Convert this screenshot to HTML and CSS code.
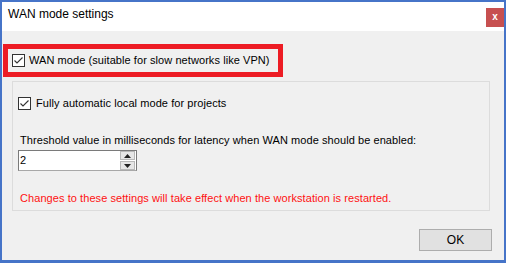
FILE: index.html
```html
<!DOCTYPE html>
<html>
<head>
<meta charset="utf-8">
<link rel="stylesheet" href="styles.css">
</head>
<body>
<div class="window">
  <div class="titlebar">
    <span class="title">WAN mode settings</span>
    <div class="close">x</div>
  </div>
  <div class="content">
    <div class="highlight">
      <div class="check">
        <svg class="box" width="13" height="13" viewBox="0 0 13 13"><rect x="0.5" y="0.5" width="12" height="12" fill="#fff" stroke="#333"/><polyline points="2.5,6.5 5,9 10.5,3.5" fill="none" stroke="#333" stroke-width="1.1"/></svg>
        <span class="ctext">WAN mode (suitable for slow networks like VPN)</span>
      </div>
    </div>
    <div class="group">
      <div class="check row1">
        <svg class="box" width="13" height="13" viewBox="0 0 13 13"><rect x="0.5" y="0.5" width="12" height="12" fill="#fff" stroke="#333"/><polyline points="2.5,6.5 5,9 10.5,3.5" fill="none" stroke="#333" stroke-width="1.1"/></svg>
        <span class="ctext wide">Fully automatic local mode for projects</span>
      </div>
      <div class="label">Threshold value in milliseconds for latency when WAN mode should be enabled:</div>
      <div class="spin">
        <span class="val">2</span>
        <div class="btns">
          <div class="sbtn"><svg width="7" height="4" viewBox="0 0 7 4"><polygon points="3.5,0 7,4 0,4" fill="#222"/></svg></div>
          <div class="sbtn"><svg width="7" height="4" viewBox="0 0 7 4"><polygon points="0,0 7,0 3.5,4" fill="#222"/></svg></div>
        </div>
      </div>
      <div class="warn">Changes to these settings will take effect when the workstation is restarted.</div>
    </div>
    <div class="footer">
      <div class="ok">OK</div>
    </div>
  </div>
</div>
</body>
</html>
```
FILE: styles.css
```css
html, body {
  margin: 0;
  padding: 0;
  background: #f0f0f0;
}
.window {
  width: 506px;
  height: 263px;
  box-sizing: border-box;
  border-style: solid;
  border-color: #4674c8;
  border-width: 2px 2px 3px 2px;
  display: flex;
  flex-direction: column;
  font-family: "Liberation Sans", Arial, sans-serif;
  font-size: 11px;
  letter-spacing: 0.07px;
  color: #000;
}
.titlebar {
  height: 29px;
  background: #fff;
  display: flex;
  align-items: flex-start;
  flex-shrink: 0;
}
.title {
  font-size: 12px;
  letter-spacing: 0;
  line-height: 25px;
  padding-left: 6px;
}
.close {
  margin-left: auto;
  margin-top: 6px;
  width: 18px;
  height: 19px;
  background: #c75050;
  color: #fff;
  font-weight: bold;
  font-size: 10px;
  line-height: 17px;
  text-align: center;
}
.content {
  flex: 1;
  background: #f0f0f0;
  display: flex;
  flex-direction: column;
}
.highlight {
  margin-top: 13px;
  margin-left: 1px;
  width: 280px;
  height: 33px;
  box-sizing: border-box;
  border: 5px solid #ed1c24;
  display: flex;
  align-items: center;
  padding-left: 4px;
}
.check {
  display: flex;
  align-items: center;
}
.box {
  display: block;
  flex-shrink: 0;
}
.ctext {
  margin-left: 4px;
  line-height: 13px;
}
.ctext.wide {
  margin-left: 5px;
}
.group {
  margin-top: 4px;
  margin-left: 10px;
  width: 478px;
  height: 130px;
  box-sizing: border-box;
  border: 1px solid #dcdcdc;
  padding-left: 5px;
  display: flex;
  flex-direction: column;
}
.row1 {
  margin-top: 15px;
  height: 13px;
}
.label {
  margin-top: 24px;
  margin-left: 2px;
  line-height: 13px;
}
.spin {
  margin-top: 3px;
  width: 119px;
  height: 21px;
  box-sizing: border-box;
  border: 1px solid #7a7a7a;
  border-bottom-color: #a8a8a8;
  background: #fff;
  display: flex;
  align-items: center;
}
.val {
  padding-left: 1px;
  flex: 1;
  line-height: 13px;
}
.btns {
  width: 15px;
  height: 19px;
  display: flex;
  flex-direction: column;
  gap: 1px;
  padding-right: 1px;
}
.sbtn {
  flex: 1;
  background: #e6e6e6;
  border: 1px solid #b8b8b8;
  display: flex;
  align-items: center;
  justify-content: center;
}
.sbtn svg {
  display: block;
}
.warn {
  margin-top: 21px;
  margin-left: 2px;
  line-height: 13px;
  color: #ff1010;
}
.footer {
  margin-top: 18px;
  display: flex;
  justify-content: flex-end;
  padding-right: 12px;
}
.ok {
  width: 73px;
  height: 22px;
  box-sizing: border-box;
  background: #e1e1e1;
  border: 1px solid #adadad;
  font-size: 12px;
  letter-spacing: 0;
  line-height: 20px;
  text-align: center;
}
```
